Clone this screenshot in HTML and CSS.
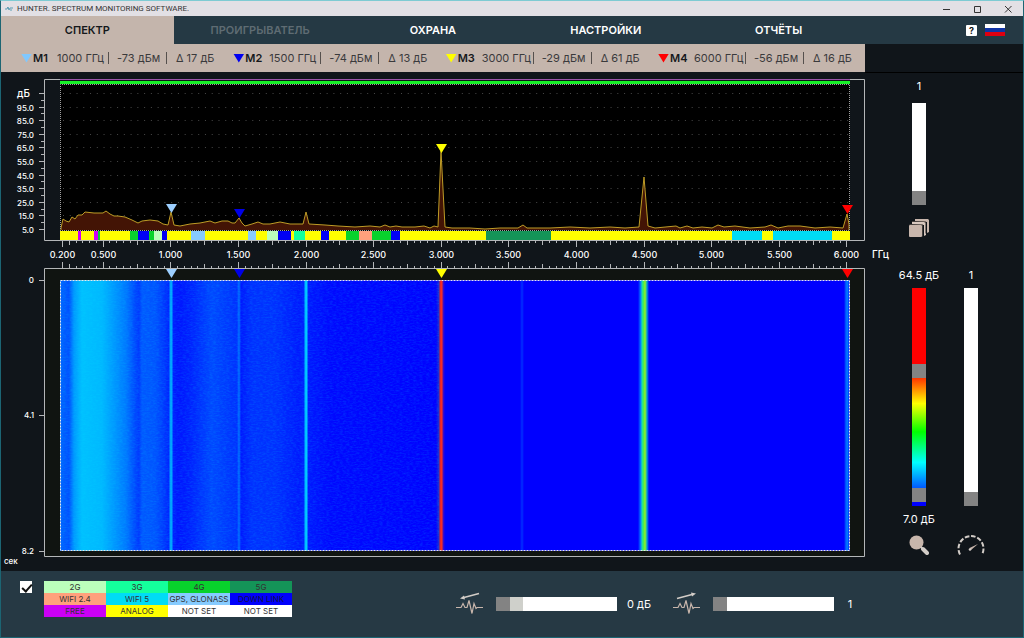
FILE: index.html
```html
<!DOCTYPE html>
<html lang="ru">
<head>
  <meta charset="UTF-8">
  <meta name="viewport" content="width=device-width, initial-scale=1">
  <title>HUNTER. SPECTRUM MONITORING SOFTWARE.</title>
  <link rel="stylesheet" href="styles.css">
</head>
<body>
  <div class="window">
    <header class="titlebar">
      <svg class="app-icon" viewBox="0 0 8 6" aria-hidden="true">
        <path d="M0 3h2l1-2 1 3 1-2h3M2 1.500h1M5 4h2" fill="none" stroke="#5d9fb5"/>
      </svg>
      <span class="title">HUNTER. SPECTRUM MONITORING SOFTWARE.</span>
      <div class="window-buttons">
        <button type="button" aria-label="Свернуть"><svg viewBox="0 0 8 8"><path d="M1 4.500h7"/></svg></button>
        <button type="button" aria-label="Развернуть"><svg viewBox="0 0 8 8"><path d="M1.500 1.500h6v6h-6z"/></svg></button>
        <button type="button" aria-label="Закрыть"><svg viewBox="0 0 8 8"><path d="M1 1l6.500 6.500M7.500 1L1 7.500"/></svg></button>
      </div>
    </header>

    <div class="menu">
      <nav class="tabs">
        <a href="#spectrum" class="tab active">СПЕКТР</a>
        <a href="#player" class="tab disabled">ПРОИГРЫВАТЕЛЬ</a>
        <a href="#guard" class="tab">ОХРАНА</a>
        <a href="#settings" class="tab">НАСТРОЙКИ</a>
        <a href="#reports" class="tab">ОТЧЁТЫ</a>
      </nav>
      <div class="menu-tools">
        <button type="button" class="help">?</button>
        <button type="button" class="flag" aria-label="Русский">
          <svg viewBox="0 0 20 12">
            <path fill="#fff" d="M0 0h20v4H0z"/>
            <path fill="#1034a6" d="M0 4h20v4H0z"/>
            <path fill="#e00010" d="M0 8h20v4H0z"/>
          </svg>
        </button>
      </div>
    </div>

    <main class="main">
      <section class="work">
        <div class="markers">
          <div class="marker">
            <span class="arrow m1"></span><b>M1</b>
            <span class="freq">1000 ГГц</span><span class="level">-73 дБм</span><span class="delta">Δ 17 дБ</span>
          </div>
          <div class="marker">
            <span class="arrow m2"></span><b>M2</b>
            <span class="freq">1500 ГГц</span><span class="level">-74 дБм</span><span class="delta">Δ 13 дБ</span>
          </div>
          <div class="marker">
            <span class="arrow m3"></span><b>M3</b>
            <span class="freq">3000 ГГц</span><span class="level">-29 дБм</span><span class="delta">Δ 61 дБ</span>
          </div>
          <div class="marker">
            <span class="arrow m4"></span><b>M4</b>
            <span class="freq">6000 ГГц</span><span class="level">-56 дБм</span><span class="delta">Δ 16 дБ</span>
          </div>
        </div>

        <svg id="chart" class="chart" viewBox="1 72 864 498" role="img" aria-label="Спектр и водопад">
          <defs>
            <linearGradient id="heat" gradientUnits="userSpaceOnUse" x1="60" x2="850" y1="0" y2="0"></linearGradient>
            <filter id="noise" x="0" y="0" width="1" height="1">
              <feTurbulence type="fractalNoise" baseFrequency="0.3 0.7" numOctaves="2" seed="4"/>
              <feColorMatrix values="0 0 0 0 0  0 0 0 0 0.8  0 0 0 0 1  0.9 0 0 0 -0.34"/>
            </filter>
          </defs>

          <rect class="plot" x="44" y="79" width="820" height="162"/>
          <rect class="black" x="60" y="84" width="790" height="147"/>
          <g id="dots"></g>
          <path id="trace" class="trace"/>
          <path class="dotted" d="M60.500 231V84.500H849.500V231M60 230.500H850"/>
          <g id="bands"></g>
          <path class="frame" d="M44.500 79.500H864.500V240.500H44.500z"/>
          <path class="limit" d="M60 79.500H850"/>
          <path class="range" d="M60 82.500H850"/>

          <g id="axisY" class="small"></g>
          <g id="axisX" class="label"></g>
          <text class="unit" x="17" y="97">дБ</text>
          <text class="unit" x="872" y="258">ГГц</text>

          <rect class="water" x="44" y="268" width="820" height="288"/>
          <rect x="60" y="280" width="790" height="271" fill="url(#heat)"/>
          <rect class="grain" x="60" y="280" width="379" height="271" filter="url(#noise)"/>
          <path class="dotted bright" d="M60.500 280.500H849.500V550.500H60.500z"/>
          <path class="frame" d="M44.500 268.500H864.500V556.500H44.500zM39 280.500h5M39 415.500h5M39 551.500h5"/>
          <g class="small">
            <text x="34" y="283">0</text>
            <text x="34" y="418">4.1</text>
            <text x="34" y="554">8.2</text>
          </g>
          <text class="seconds" x="4" y="564">сек</text>
          <g id="pins"></g>
        </svg>
      </section>

      <aside class="side">
        <div class="control average">
          <output>1</output>
          <input type="range" class="slider vertical short" min="1" max="20" value="1" aria-label="Усреднение">
          <svg class="icon-layers" viewBox="0 0 20 18" aria-hidden="true">
            <g fill="#c8b6ac">
              <path d="M6 0h13l1 1v12l-2 1V3L6 2z"/>
              <path d="M3 3h12l2 1v12l-2 1V6L3 5z" fill="#d8c8bf"/>
              <rect x="0" y="6" width="13" height="12" rx="1"/>
            </g>
            <path d="M3 2.500h13.500v12M0.500 5.500h13v12" fill="none" stroke="#5a504b" stroke-width="0.700"/>
          </svg>
        </div>
        <div class="control">
          <output>64.5 дБ</output>
          <div class="dual">
            <input type="range" class="slider vertical high" min="5" max="100" step="0.5" value="64.5" aria-label="Верхний уровень">
            <input type="range" class="slider vertical low" min="5" max="100" step="0.5" value="7" aria-label="Нижний уровень">
          </div>
          <output>7.0 дБ</output>
          <svg class="icon" viewBox="0 0 20 20" aria-hidden="true">
            <circle cx="7.500" cy="7.500" r="7" fill="#c8b6ac"/>
            <path d="M14 14l4 4" stroke="#d3cdc8" stroke-width="4" stroke-linecap="round"/>
            <path d="M12 12l1.500 1.500" stroke="#d3cdc8" stroke-width="2"/>
          </svg>
        </div>
        <div class="control">
          <output>1</output>
          <input type="range" class="slider vertical" min="1" max="20" value="1" aria-label="Скорость">
          <svg class="icon gauge" viewBox="0 0 28 22" aria-hidden="true">
            <path d="M3 20.500A12.500 12.500 0 1 1 25 20.500" fill="none" stroke="#d3cdc8" stroke-width="2" stroke-dasharray="4.600 1.800"/>
            <path d="M12.500 14L21 10l-7 6z" fill="#c8b6ac"/>
            <circle cx="13" cy="15.500" r="1.300" fill="#d3cdc8"/>
          </svg>
        </div>
      </aside>
    </main>

    <footer class="bottom">
      <div class="legend">
        <input type="checkbox" class="check" checked aria-label="Показать диапазоны">
        <ul class="bands">
          <li class="g2">2G</li>
          <li class="g3">3G</li>
          <li class="g4">4G</li>
          <li class="g5">5G</li>
          <li class="wifi2">WIFI 2.4</li>
          <li class="wifi5">WIFI 5</li>
          <li class="gps">GPS, GLONASS</li>
          <li class="down">DOWN LINK</li>
          <li class="free">FREE</li>
          <li class="analog">ANALOG</li>
          <li>NOT SET</li>
          <li>NOT SET</li>
        </ul>
      </div>
      <div class="gain">
        <svg class="icon-wave" viewBox="0 0 27 24" aria-hidden="true">
          <path d="M0 15.500h5l2-4 2 4h2l2-7 3 13 2-10 2 5 1-1h6" fill="none" stroke="#c8b6ac" stroke-width="1.200"/>
          <path d="M8 5.500L23 1.500" stroke="#d3cdc8" stroke-width="1.300"/>
          <path d="M4 6.500l4-3 1 4z" fill="#d3cdc8"/>
        </svg>
        <input type="range" class="slider horizontal attenuator" min="0" max="30" value="0" aria-label="Аттенюатор">
        <output>0 дБ</output>
      </div>
      <div class="gain">
        <svg class="icon-wave" viewBox="0 0 27 24" aria-hidden="true">
          <path d="M0 15.500h5l2-4 2 4h2l2-7 3 13 2-10 2 5 1-1h6" fill="none" stroke="#c8b6ac" stroke-width="1.200"/>
          <path d="M4 6.500L19 2.500" stroke="#d3cdc8" stroke-width="1.300"/>
          <path d="M23 1.500l-4 3-1-4z" fill="#d3cdc8"/>
        </svg>
        <input type="range" class="slider horizontal" min="1" max="10" value="1" aria-label="Усиление">
        <output>1</output>
      </div>
    </footer>
  </div>

  <script src="chart.js"></script>
</body>
</html>
```

FILE: styles.css
```css
* {
  box-sizing: border-box;
}
body {
  margin: 0;
  background: #10151a;
  color: #fff;
  font-family: Inter, "Liberation Sans", sans-serif;
  font-size: 11px;
}
button {
  padding: 0;
  border: 0;
  background: none;
}
.window {
  display: flex;
  flex-direction: column;
  min-height: 100vh;
  border: 1px solid #1c6573;
  border-top-color: #7ecbd3;
}

/* title bar */
.titlebar {
  display: flex;
  align-items: center;
  height: 15px;
  padding: 0 11px 0 4px;
  background: #e2e0e5;
  color: #333;
}
.app-icon {
  width: 8px;
  height: 6px;
  margin-right: 4px;
}
.title {
  font: 8px/14px Roboto, "Noto Sans", sans-serif;
}
.window-buttons {
  display: flex;
  gap: 23px;
  margin-left: auto;
}
.window-buttons button,
.window-buttons svg {
  display: block;
  width: 8px;
  height: 8px;
}
.window-buttons path {
  fill: none;
  stroke: #333;
}

/* menu */
.menu {
  display: grid;
  grid-template-columns: 1fr 158px;
  height: 28px;
  background: #253944;
}
.tabs {
  display: grid;
  grid-template-columns: repeat(5, 1fr);
}
.tab {
  color: #fff;
  font-size: 11px;
  font-weight: 600;
  line-height: 28px;
  text-align: center;
  text-decoration: none;
}
.tab.active {
  background: #c4b5ac;
  color: #15181b;
}
.tab.disabled {
  color: #5f6c73;
}
.menu-tools {
  display: flex;
  align-items: center;
  justify-content: flex-end;
  gap: 8px;
  padding-right: 18px;
}
.help {
  width: 11px;
  height: 11px;
  border-radius: 1px;
  background: #fff;
  color: #111;
  font: bold 9px/11px Inter, sans-serif;
}
.flag,
.flag svg {
  display: block;
  width: 20px;
  height: 12px;
}

/* markers */
.main {
  display: grid;
  grid-template-columns: 1fr 158px;
  flex: 1;
}
.markers {
  display: grid;
  grid-template-columns: repeat(3, 1fr) 207px;
  height: 28px;
  padding-left: 20px;
  background: #c4b5ac;
  color: #3a3a3c;
}
.marker {
  display: flex;
  align-items: center;
  white-space: nowrap;
}
.marker b {
  width: 25px;
  padding-left: 1px;
  color: #15181b;
  font-weight: 600;
}
.arrow {
  width: 11px;
  height: 9px;
  background: #80c8ff;
  clip-path: polygon(0 0, 100% 0, 50% 100%);
}
.arrow.m2 { background: #0000f0; }
.arrow.m3 { background: #ffff00; }
.arrow.m4 { background: #ff0000; }
.freq,
.level {
  border-right: 1px solid #55504d;
  line-height: 12px;
}
.freq {
  width: 52px;
}
.level {
  width: 58px;
  padding-left: 8px;
}
.delta {
  padding-left: 9px;
}

/* chart */
.chart {
  display: block;
  width: 100%;
  overflow: visible;
}
.plot { fill: #10151a; }
.water { fill: #101411; }
.black { fill: #000; }
.frame,
.tick {
  fill: none;
  stroke: #b4b6b8;
}
.limit { stroke: #9a55a8; }
.range {
  stroke: #18f028;
  stroke-width: 3;
}
.dotted {
  fill: none;
  stroke: #a0a0a0;
  stroke-dasharray: 1 1;
}
.bright { stroke: #e8e8e8; stroke-dasharray: 2 1; }
.dot { stroke: #484848; stroke-dasharray: 1 5.76; }
.trace {
  fill: #431405;
  stroke: #bd9c26;
}
.grain { opacity: 0.35; }
.small,
.label,
.unit,
.seconds {
  fill: #fff;
  font-weight: 500;
}
.small {
  font-size: 8px;
  text-anchor: end;
}
.label {
  font-size: 9px;
  text-anchor: middle;
}
.unit { font-size: 10px; }
.seconds { font-size: 8px; }

/* side panel */
.side {
  display: grid;
  grid-template-columns: 52px 52px;
  grid-template-rows: 161px auto;
  align-content: start;
  row-gap: 28px;
  padding: 35px 0 0 28px;
  background: linear-gradient(#000, #000) 0 28px / 100% 1px no-repeat;
}
.control {
  display: flex;
  flex-direction: column;
  align-items: center;
}
.control output {
  line-height: 14px;
  white-space: nowrap;
}
.average {
  grid-column: 1 / -1;
  width: 52px;
}
.control .slider,
.dual {
  margin: 6px 0;
}
.control .short {
  height: 102px;
  margin: 10px 0 14px;
}
.icon-layers {
  width: 20px;
  height: 18px;
}
.icon {
  width: 20px;
  height: 20px;
  margin-top: 9px;
}
.gauge {
  width: 28px;
  height: 22px;
  margin-top: 22px;
}

/* sliders */
.slider {
  appearance: none;
  display: block;
  margin: 0;
  background: #fff;
}
.slider::-webkit-slider-thumb {
  appearance: none;
  width: 14px;
  height: 14px;
  background: #838383;
}
.vertical {
  width: 14px;
  height: 218px;
  writing-mode: vertical-lr;
  direction: rtl;
}
.horizontal {
  width: 121px;
  height: 14px;
}
.attenuator {
  background: linear-gradient(90deg, #cfd0cb 27px, #fff 27px);
}
.dual {
  display: grid;
  background: linear-gradient(#f00 38%, #ff4000 42%, #ff0 53%, #0f0 66%, #0ff 80%, #05f 92%, #00f 96%);
}
.control .dual .slider {
  grid-area: 1 / 1;
  margin: 0;
  background: none;
  pointer-events: none;
}
.dual .slider::-webkit-slider-thumb {
  pointer-events: auto;
}

/* bottom panel */
.bottom {
  display: flex;
  align-items: flex-start;
  height: 66px;
  padding: 10px 19px;
  background: #263944;
}
.legend {
  display: flex;
  gap: 12px;
  width: 436px;
}
.check {
  appearance: none;
  width: 12px;
  height: 12px;
  margin: 0;
  background: #fff;
}
.check:checked::before {
  content: "";
  display: block;
  width: 8px;
  height: 4px;
  margin: 3px 2px;
  border: solid #111;
  border-width: 0 0 2px 2px;
  transform: rotate(-48deg);
}
.bands {
  display: grid;
  grid-template-columns: repeat(4, 62px);
  grid-auto-rows: 12px;
  margin: 0;
  padding: 0;
  list-style: none;
}
.bands li {
  background: #fff;
  color: #333;
  font-size: 8px;
  line-height: 12px;
  text-align: center;
  white-space: nowrap;
}
.bands .g2 { background: #bbffbb; }
.bands .g3 { background: #14ff9c; }
.bands .g4 { background: #08d22c; }
.bands .g5 { background: #149458; }
.bands .wifi2 { background: #ffa07c; }
.bands .wifi5 { background: #00dcf5; }
.bands .gps { background: #86cbff; }
.bands .down { background: #0000fc; color: #10104a; }
.bands .free { background: #cb00f5; }
.bands .analog { background: #ffff00; }
.gain {
  display: flex;
  align-items: center;
  width: 217px;
  padding-top: 11px;
}
.icon-wave {
  width: 27px;
  height: 24px;
  margin-right: 13px;
}
.gain output {
  min-width: 12px;
  margin-left: 10px;
  text-align: center;
}
```

FILE: chart.js
```js
const NS = "http://www.w3.org/2000/svg";

const yellow = "#ffff00", blue = "#0000f5", green = "#08d22c", mint = "#14ff9c",
  pale = "#bbffbb", sky = "#86cbff", magenta = "#cb00f5", salmon = "#ffa07c",
  pine = "#149458", cyan = "#00dcf5";

// [start, end, color]
const bands = [
  [78, 81, magenta], [94, 98, magenta], [98, 100, green],
  [130, 138, green], [138, 149, blue], [149, 154, green], [154, 162, pale], [162, 167, blue],
  [191, 205, sky], [248, 256, sky], [267, 278, pale], [278, 291, blue], [294, 305, mint],
  [321, 329, blue], [346, 359, green], [359, 372, salmon], [372, 391, green], [391, 400, blue],
  [486, 551, pine], [732, 762, cyan], [773, 832, cyan]
];

const trace = [
  [61, 228], [63, 219], [66, 221], [69, 222], [72, 217], [75, 219], [78, 215], [82, 215], [85, 212],
  [94, 213], [103, 213], [106, 211], [110, 214], [114, 216], [118, 216], [125, 217], [132, 220],
  [138, 223], [142, 221], [150, 220], [158, 221], [163, 224], [168, 225], [171, 212], [174, 225],
  [180, 226], [190, 224], [200, 223], [210, 221], [215, 223], [222, 221], [228, 221], [232, 223],
  [235, 223], [239, 218], [242, 223], [245, 226], [252, 224], [258, 222], [263, 224], [270, 224],
  [280, 222], [290, 224], [303, 224], [306, 212], [309, 224], [325, 225], [338, 226], [355, 227],
  [370, 226], [380, 227], [385, 225], [390, 227], [396, 226], [402, 227], [415, 227], [424, 226],
  [430, 228], [434, 226], [438, 227], [441, 151], [445, 227], [452, 228], [470, 228], [485, 229],
  [500, 228], [518, 228], [523, 225], [527, 228], [550, 228], [570, 227], [590, 228], [610, 227],
  [625, 228], [639, 227], [644, 177], [648, 226], [655, 228], [676, 226], [680, 228], [687, 226],
  [693, 228], [702, 227], [712, 228], [718, 225], [724, 227], [735, 226], [750, 228], [765, 227],
  [771, 225], [778, 228], [788, 226], [800, 226], [815, 228], [830, 227], [843, 228], [847, 214], [849, 224]
];

// waterfall colors by horizontal position
const heat = [
  [60, "#0066ff"], [69, "#0050ff"], [74, "#0098ff"], [82, "#00c0ff"], [102, "#00b8ff"], [114, "#0098ff"],
  [126, "#0078ff"], [136, "#0044ff"], [139, "#0038ff"], [142, "#0058ff"], [155, "#0054ff"], [164, "#0038ff"],
  [169, "#0024ff"], [170, "#009cff"], [172, "#00a8ff"], [173, "#0020ff"], [178, "#0014ff"], [190, "#0020ff"],
  [212, "#0048ff"], [232, "#0034ff"], [237, "#0030ff"], [239, "#0070ff"], [241, "#0018ff"], [252, "#0030ff"],
  [275, "#0030ff"], [300, "#0018ff"], [304, "#0020ff"], [305, "#00b8ff"], [307, "#00d0ff"], [308, "#0018ff"],
  [330, "#0008ff"], [400, "#0004ff"], [436, "#0000ff"], [439, "#2030d0"], [440, "#e02030"], [442, "#ff3020"],
  [443, "#5010b0"], [445, "#0000ff"], [520, "#0000ff"], [522, "#0030ff"], [524, "#0000ff"],
  [638, "#0000ff"], [641, "#0090ff"], [642, "#20e0a0"], [644, "#50f040"], [645, "#a0f020"], [647, "#00a0d0"],
  [649, "#0000ff"], [844, "#0000ff"], [846, "#0068ff"], [848, "#0080ff"], [849, "#0010ff"]
];

const pins = [
  [171, 204, "#9ccfff"], [239, 209, "#0000e8"], [441, 144, "#ffff00"], [847, 205, "#ff0000"]
];

function add(parentId, tag, attrs, text) {
  const el = document.createElementNS(NS, tag);
  for (const key in attrs) {
    el.setAttribute(key, attrs[key]);
  }
  if (text) {
    el.textContent = text;
  }
  document.getElementById(parentId).appendChild(el);
}

const xOf = ghz => 35.6 + ghz * 135.2;
const yOf = db => 229.5 - (db - 5) * 1.36;

for (let db = 5; db <= 105; db += 5) {
  const y = Math.floor(yOf(db)) + 0.5;
  const major = db % 10 === 5;
  add("axisY", "path", { class: "tick", d: `M${major ? 39 : 41} ${y}H44` });
  if (major) {
    add("dots", "path", { class: "dot", d: `M63 ${y}H849` });
    if (db < 105) {
      add("axisY", "text", { x: 34, y: y + 3 }, db.toFixed(1));
    }
  }
}

for (let i = 4; i <= 120; i++) {
  const x = Math.floor(xOf(i / 20)) + 0.5;
  const major = i % 10 === 0 || i === 4;
  const size = major ? 6 : i % 5 === 0 ? 4 : 2;
  add("axisX", "path", { class: "tick", d: `M${x} 241v${size}M${x} 268v${-size}` });
  if (major) {
    add("axisX", "text", { x: x, y: 258 }, (i / 20).toFixed(3));
  }
}

add("bands", "rect", { x: 60, y: 231, width: 790, height: 9, fill: yellow });
bands.forEach(([from, to, color]) => {
  add("bands", "rect", { x: from, y: 231, width: to - from, height: 9, fill: color });
});

document.getElementById("trace").setAttribute("d",
  "M61 230L" + trace.map(p => p.join(" ")).join("L") + "L849 230");

heat.forEach(([x, color]) => {
  add("heat", "stop", { offset: (x - 60) / 790, "stop-color": color });
});

pins.forEach(([x, y, color]) => {
  add("pins", "path", { d: `M${x - 5} ${y}h11l-5.5 9z`, fill: color });
  add("pins", "path", { d: `M${x - 5} 269h11l-5.5 9z`, fill: color });
});
```
